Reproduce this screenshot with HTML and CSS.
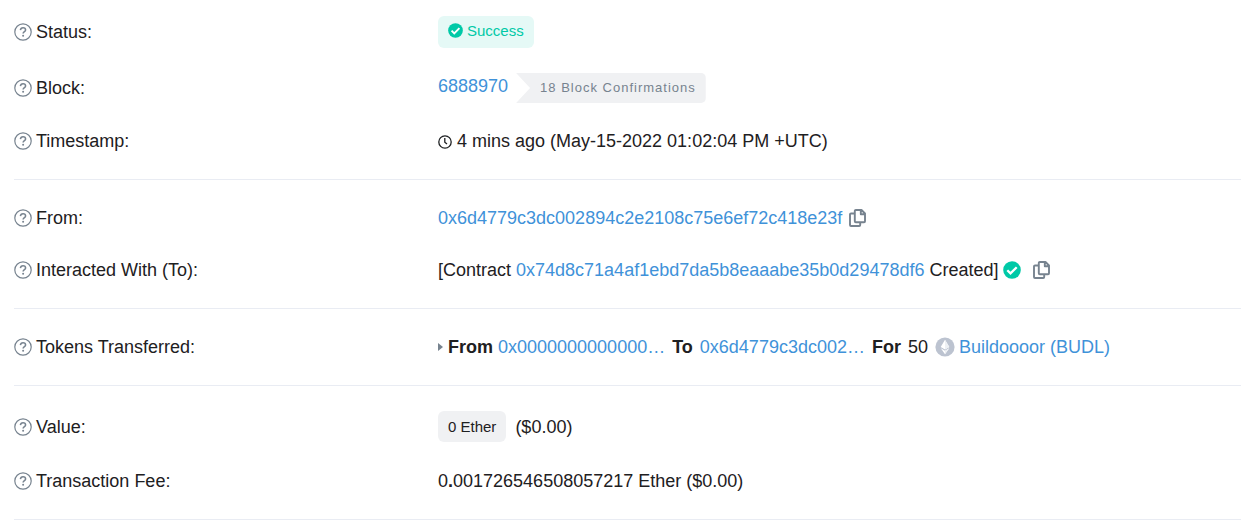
FILE: index.html
```html
<!DOCTYPE html>
<html lang="en">
<head>
<meta charset="utf-8">
<title>Transaction Details</title>
<link rel="stylesheet" href="styles.css">
</head>
<body>
<svg class="sprite" aria-hidden="true">
  <symbol id="help" viewBox="0 0 18 18"><circle cx="9" cy="9" r="8.2" fill="none" stroke="currentColor" stroke-width="1.2"/><path d="M6.4 7.1C6.6 5.5 7.6 4.8 9 4.8c1.500 0 2.600.8 2.600 2.200C11.600 8.700 9.100 8.700 9.100 10.600" fill="none" stroke="currentColor" stroke-width="1.500"/><circle cx="9.100" cy="12.700" r="1" fill="currentColor"/></symbol>
  <symbol id="check" viewBox="0 0 18 18"><circle cx="9" cy="9" r="8.800" fill="currentColor"/><path d="M4.300 9.200l3.200 3.200 6.200-6.200" fill="none" stroke="#fff" stroke-width="2.300"/></symbol>
  <symbol id="clock" viewBox="0 0 14 14"><circle cx="7" cy="7" r="6.200" fill="none" stroke="currentColor" stroke-width="1.300"/><path d="M6.800 3v4.200l2.200 1.800" fill="none" stroke="currentColor" stroke-width="1.300"/></symbol>
  <symbol id="copy" viewBox="0 0 17 18"><path d="M6.800 1h5.700L16 4.500v7.700a1 1 0 0 1-1 1H6.800a1 1 0 0 1-1-1V2a1 1 0 0 1 1-1z M11.800 1v4.200H16 M5.800 4.500H2a1 1 0 0 0-1 1V16a1 1 0 0 0 1 1h8.200a1 1 0 0 0 1-1v-2.800" fill="none" stroke="currentColor" stroke-width="1.900" stroke-linejoin="round"/></symbol>
  <symbol id="token" viewBox="0 0 20 20"><circle cx="10" cy="10" r="9.600" fill="#bcc3d0"/><path d="M10 2.800L5.700 10 10 12.500 14.300 10z M5.800 11.200L10 17.200l4.200-6L10 13.700z" fill="#fff"/><path d="M10 2.800v9.700l4.300-2.500z M10 13.700v3.500l4.200-6z" fill="#edf0f4"/></symbol>
</svg>
<main class="details">
  <dl class="group">
    <div class="row row-status">
      <dt><svg class="help"><use href="#help"/></svg>Status:</dt>
      <dd><span class="badge badge-success"><svg class="tick"><use href="#check"/></svg>Success</span></dd>
    </div>
    <div class="row row-block">
      <dt><svg class="help"><use href="#help"/></svg>Block:</dt>
      <dd><a class="block-number" href="#block">6888970</a><span class="confirmations">18 Block Confirmations</span></dd>
    </div>
    <div class="row">
      <dt><svg class="help"><use href="#help"/></svg>Timestamp:</dt>
      <dd><svg class="clock"><use href="#clock"/></svg>4 mins ago (May-15-2022 01:02:04 PM +UTC)</dd>
    </div>
  </dl>
  <dl class="group">
    <div class="row">
      <dt><svg class="help"><use href="#help"/></svg>From:</dt>
      <dd><a href="#from">0x6d4779c3dc002894c2e2108c75e6ef72c418e23f</a><button class="copy" type="button" aria-label="Copy sender"><svg><use href="#copy"/></svg></button></dd>
    </div>
    <div class="row">
      <dt><svg class="help"><use href="#help"/></svg>Interacted With (To):</dt>
      <dd><span>[Contract <a href="#contract">0x74d8c71a4af1ebd7da5b8eaaabe35b0d29478df6</a> Created]</span><svg class="verified"><use href="#check"/></svg><button class="copy" type="button" aria-label="Copy contract"><svg><use href="#copy"/></svg></button></dd>
    </div>
  </dl>
  <dl class="group">
    <div class="row">
      <dt><svg class="help"><use href="#help"/></svg>Tokens Transferred:</dt>
      <dd class="transfer"><span class="caret"></span><span><b>From</b> <a href="#sender">0x0000000000000…</a></span><b>To</b><a href="#receiver">0x6d4779c3dc002…</a><b>For</b><span>50</span><a class="token" href="#token-page"><svg><use href="#token"/></svg>Buildoooor (BUDL)</a></dd>
    </div>
  </dl>
  <dl class="group">
    <div class="row row-value">
      <dt><svg class="help"><use href="#help"/></svg>Value:</dt>
      <dd><span class="badge badge-value">0 Ether</span>($0.00)</dd>
    </div>
    <div class="row">
      <dt><svg class="help"><use href="#help"/></svg>Transaction Fee:</dt>
      <dd><span>0<b>.</b>001726546508057217 Ether ($0.00)</span></dd>
    </div>
  </dl>
</main>
</body>
</html>
```
FILE: styles.css
```css
* { box-sizing: border-box; }
body {
  margin: 0;
  background: #fff;
  color: #1e2022;
  font: 18px/24px "Liberation Sans", Arial, sans-serif;
}
.sprite { display: none; }
svg { flex: none; }
a { color: #3f92d9; text-decoration: none; }
.details { padding: 3px 0 0 14px; }
.group {
  margin: 0;
  padding-bottom: 12px;
  border-bottom: 1px solid #e9ecf3;
}
.group + .group { padding-top: 12px; }
.row {
  display: grid;
  grid-template-columns: 424px 1fr;
  align-items: center;
  min-height: 52px;
}
.row-status { min-height: 58px; }
.row-block { min-height: 54px; }
.row-value { min-height: 57px; }
dt, dd {
  display: flex;
  align-items: center;
  margin: 0;
  white-space: nowrap;
}
.help {
  width: 18px;
  height: 18px;
  margin-right: 4px;
  color: #77838f;
}
.badge {
  display: flex;
  align-items: center;
  padding: 4px 10px;
  border-radius: 6px;
  font-size: 15px;
}
.badge-success {
  gap: 4px;
  padding-top: 3px;
  padding-bottom: 6px;
  background: #e5f9f6;
  color: #00c9a7;
  line-height: 23px;
}
.badge-value {
  margin-right: 9px;
  background: #f0f1f3;
  line-height: 23px;
}
.tick { width: 15px; height: 15px; }
.block-number { padding-bottom: 4px; }
.confirmations {
  margin-left: 8px;
  padding: 0 10px 0 24px;
  border-radius: 0 5px 5px 0;
  background: #f0f1f3;
  clip-path: polygon(0 0, 100% 0, 100% 100%, 0 100%, 14px 50%);
  color: #77838f;
  font-size: 13px;
  line-height: 30px;
  letter-spacing: 1px;
}
.clock { width: 14px; height: 14px; margin: 1px 5px 0 0; }
.copy {
  display: flex;
  margin: 0 0 0 7px;
  padding: 0;
  border: 0;
  background: none;
  color: #77838f;
}
.copy svg { width: 17px; height: 18px; }
.verified {
  width: 18px;
  height: 18px;
  margin: 0 5px 0 4px;
  color: #00c9a7;
}
.transfer { gap: 7px; }
.caret {
  margin-right: -2px;
  border: 4px solid transparent;
  border-left: 5px solid #77838f;
  border-right: 0;
}
.token { display: flex; align-items: center; gap: 4px; }
.token svg { width: 20px; height: 20px; }
```
